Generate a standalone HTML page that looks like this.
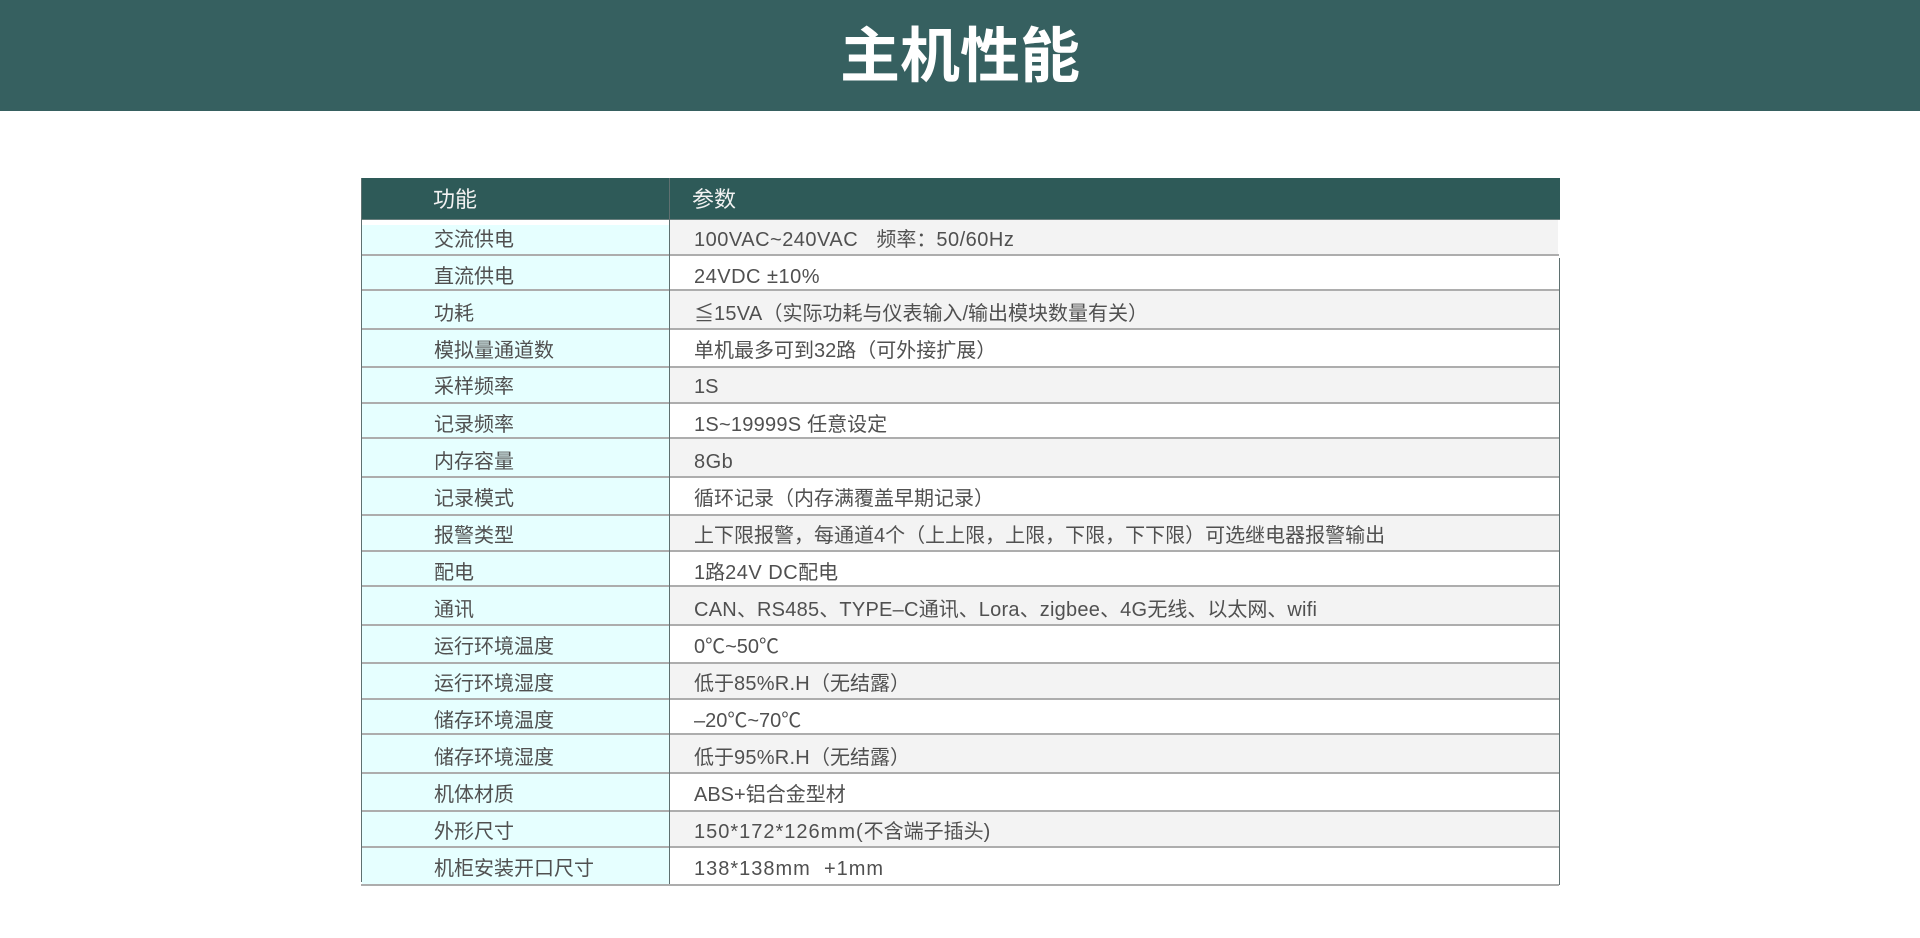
<!DOCTYPE html>
<html lang="zh-CN"><head><meta charset="utf-8"><title>主机性能</title>
<style>
html,body{margin:0;padding:0;background:#fff}
#p{position:relative;width:1920px;height:938px;overflow:hidden;background:#fff;font-family:"Liberation Sans","Noto Sans CJK SC",sans-serif;font-size:20px;color:#505050}
#p div{position:absolute}
.h{left:0;top:0;width:1920px;height:111px;background:#366060}
.t{left:0;width:1920px;top:12px;line-height:80px;text-align:center;color:#fff;font-size:60px;font-weight:700;font-family:"Noto Sans CJK SC",sans-serif}
.th{left:361px;top:178px;width:1199px;height:42px;background:#2e5a58;box-shadow:inset 0 -1px #6a7f7e}
.hc{top:183px;line-height:34px;font-size:22px;color:#f2f2f2;white-space:nowrap}
.l{left:362px;width:307px;background:#e6ffff}
.r{left:670px;width:889px}
.g{background:#f3f3f3}
.ln{left:362px;width:1197px;height:2px;background:#adadad}
.v{width:1px;background:#5f7070}
.a,.b{line-height:30px;white-space:pre;margin-top:1px}
.a{left:434px}.b{left:694px}
.e1{letter-spacing:.25px}.e2{letter-spacing:.5px}.e3{letter-spacing:1px}
</style></head><body><div id="p">
<div class="h"></div><div class="t">主机性能</div>
<div class="th"></div>
<div class="hc" style="left:433px">功能</div><div class="hc" style="left:692px">参数</div>

<div class="l" style="top:225px;height:659px"></div>
<div class="r g" style="top:220px;height:34px;width:888px"></div>
<div class="r g" style="top:291px;height:37px"></div>
<div class="r g" style="top:368px;height:35px"></div>
<div class="r g" style="top:439px;height:38px"></div>
<div class="r g" style="top:516px;height:35px"></div>
<div class="r g" style="top:587px;height:38px"></div>
<div class="r g" style="top:664px;height:35px"></div>
<div class="r g" style="top:735px;height:38px"></div>
<div class="r g" style="top:812px;height:35px"></div>

<div class="ln" style="top:254px"></div><div class="ln" style="top:289px"></div><div class="ln" style="top:328px"></div>
<div class="ln" style="top:366px"></div><div class="ln" style="top:402px"></div><div class="ln" style="top:437px"></div>
<div class="ln" style="top:476px"></div><div class="ln" style="top:514px"></div><div class="ln" style="top:550px"></div>
<div class="ln" style="top:585px"></div><div class="ln" style="top:624px"></div><div class="ln" style="top:662px"></div>
<div class="ln" style="top:698px"></div><div class="ln" style="top:733px"></div><div class="ln" style="top:772px"></div>
<div class="ln" style="top:810px"></div><div class="ln" style="top:846px"></div><div class="ln" style="top:884px;left:361px;width:1198px"></div>

<div class="v" style="left:361px;top:178px;height:704px"></div>
<div class="v" style="left:669px;top:178px;height:706px"></div>
<div class="v" style="left:1559px;top:258px;height:627px"></div>

<div class="a" style="top:224px">交流供电</div><div class="b" style="top:224px"><span class="e2">100VAC~240VAC   </span>频率：<span class="e2">50/60Hz</span></div>
<div class="a" style="top:261px">直流供电</div><div class="b" style="top:261px"><span class="e2">24VDC ±10%</span></div>
<div class="a" style="top:298px">功耗</div><div class="b" style="top:298px">≦<span class="e1">15VA</span>（实际功耗与仪表输入/输出模块数量有关）</div>
<div class="a" style="top:335px">模拟量通道数</div><div class="b" style="top:335px">单机最多可到32路（可外接扩展）</div>
<div class="a" style="top:371px">采样频率</div><div class="b" style="top:371px">1S</div>
<div class="a" style="top:409px">记录频率</div><div class="b" style="top:409px"><span class="e1">1S~19999S </span>任意设定</div>
<div class="a" style="top:446px">内存容量</div><div class="b" style="top:446px"><span class="e2">8Gb</span></div>
<div class="a" style="top:483px">记录模式</div><div class="b" style="top:483px">循环记录（内存满覆盖早期记录）</div>
<div class="a" style="top:520px">报警类型</div><div class="b" style="top:520px">上下限报警，每通道4个（上上限，上限，下限，下下限）可选继电器报警输出</div>
<div class="a" style="top:557px">配电</div><div class="b" style="top:557px">1路<span class="e2">24V DC</span>配电</div>
<div class="a" style="top:594px">通讯</div><div class="b" style="top:594px"><span class="e1">CAN</span>、<span class="e1">RS485</span>、<span class="e1">TYPE–C</span>通讯、<span class="e1">Lora</span>、<span class="e1">zigbee</span>、<span class="e1">4G</span>无线、以太网、<span class="e1">wifi</span></div>
<div class="a" style="top:631px">运行环境温度</div><div class="b" style="top:631px">0℃~50℃</div>
<div class="a" style="top:668px">运行环境湿度</div><div class="b" style="top:668px">低于<span class="e1">85%R.H</span>（无结露）</div>
<div class="a" style="top:705px">储存环境温度</div><div class="b" style="top:705px">–20℃~70℃</div>
<div class="a" style="top:742px">储存环境湿度</div><div class="b" style="top:742px">低于<span class="e1">95%R.H</span>（无结露）</div>
<div class="a" style="top:779px">机体材质</div><div class="b" style="top:779px">ABS+铝合金型材</div>
<div class="a" style="top:816px">外形尺寸</div><div class="b" style="top:816px"><span class="e3">150*172*126mm(</span>不含端子插头<span class="e3">)</span></div>
<div class="a" style="top:853px">机柜安装开口尺寸</div><div class="b" style="top:853px"><span class="e3">138*138mm  +1mm</span></div>
</div></body></html>
